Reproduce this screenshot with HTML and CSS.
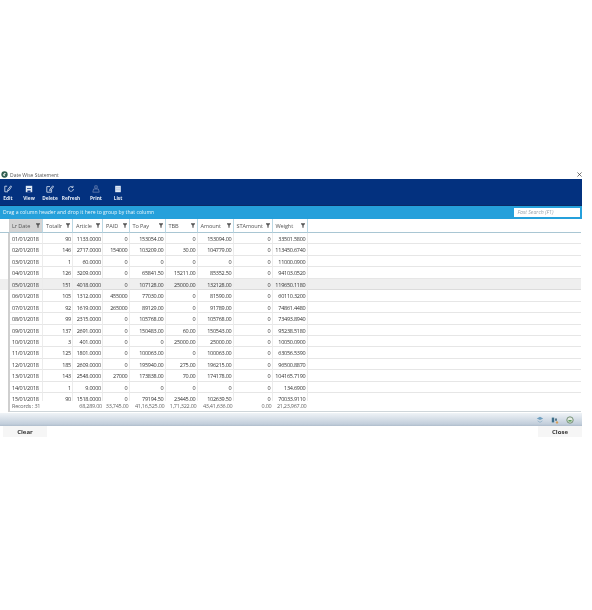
FILE: index.html
```html
<!DOCTYPE html>
<html lang="en">
<head>
<meta charset="utf-8">
<title>Date Wise Statement</title>
<link rel="stylesheet" href="styles.css">
</head>
<body>
<svg class="defs" width="0" height="0">
  <symbol id="funnel" viewBox="0 0 6 7"><path d="M0 0h6v1.2L3.9 3.4V7H2.1V3.4L0 1.2z"/></symbol>
</svg>
<main class="window">
  <div class="titlebar">
    <svg class="appicon" viewBox="0 0 8 8"><circle cx="4" cy="4" r="3.6" fill="#2f5d50"/><path d="M2 4.500 4 2l2 1-2 1 1 2-2-.5z" fill="#dfe8e4"/></svg>
    <span class="title">Date Wise Statement</span>
    <svg class="closex" viewBox="0 0 6 6"><path d="M.5.5l5 5M5.500.5l-5 5" stroke="#333" stroke-width=".8" fill="none"/></svg>
  </div>
  <div class="toolbar">
    <div class="tool"><svg viewBox="0 0 10 10"><path d="M1 1.500h3M1 1.500v7h4M8.500 1 5 5.500l-.5 2 2-1L9.500 2z" fill="none" stroke="#dfe9f5" stroke-width="1"/></svg><span>Edit</span></div>
    <div class="tool"><svg viewBox="0 0 10 10"><path d="M1 1h8v8H1z" fill="#dfe9f5"/><path d="M2.500 4h5v1h-5zM3 7h4v2H3z" fill="#0b3384"/></svg><span>View</span></div>
    <div class="tool"><svg viewBox="0 0 10 10"><path d="M1 2h4M1 2v7h6V6M8.500 1 5 5l-.5 2 2-1L9.500 2z" fill="none" stroke="#dfe9f5" stroke-width="1"/></svg><span>Delete</span></div>
    <div class="tool"><svg viewBox="0 0 10 10"><path d="M8 5a3 3 0 1 1-1-2.300M7.500 1v2h-2" fill="none" stroke="#dfe9f5" stroke-width="1"/></svg><span>Refresh</span></div>
    <div class="tool"><svg viewBox="0 0 10 10"><path d="M3.500 1h3v3h-3zM1 9l1-4h6l1 4z" fill="none" stroke="#7f93bd" stroke-width=".8"/></svg><span>Print</span></div>
    <div class="tool"><svg viewBox="0 0 10 10"><path d="M1.500 1h7v8h-7z" fill="#dfe9f5"/><path d="M2.500 3h5v1h-5zM2.500 5.500h5v1h-5z" fill="#9db2d6"/></svg><span>List</span></div>
  </div>
  <div class="groupbar">
    <span>Drag a column header and drop it here to group by that column</span>
    <span class="search">Fast Search (F1)</span>
  </div>
  <div class="grid">
    <div class="row head">
      <div class="ind"></div>
      <div class="hc sorted">Lr Date<svg><use href="#funnel"/></svg></div>
      <div class="hc">Totallr<svg><use href="#funnel"/></svg></div>
      <div class="hc">Article<svg><use href="#funnel"/></svg></div>
      <div class="hc">PAID<svg><use href="#funnel"/></svg></div>
      <div class="hc">To Pay<svg><use href="#funnel"/></svg></div>
      <div class="hc">TBB<svg><use href="#funnel"/></svg></div>
      <div class="hc">Amount<svg><use href="#funnel"/></svg></div>
      <div class="hc">STAmount<svg><use href="#funnel"/></svg></div>
      <div class="hc">Weight<svg><use href="#funnel"/></svg></div>
      <div class="fill"></div>
    </div>
    <div class="body">
      <div class="row"><div class="ind"></div><div class="c d">01/01/2018</div><div class="c">90</div><div class="c">1133.0000</div><div class="c">0</div><div class="c">153054.00</div><div class="c">0</div><div class="c">153094.00</div><div class="c">0</div><div class="c">33501.5800</div><div class="fill"></div></div>
      <div class="row"><div class="ind"></div><div class="c d">02/01/2018</div><div class="c">146</div><div class="c">2717.0000</div><div class="c">154000</div><div class="c">103209.00</div><div class="c">30.00</div><div class="c">104779.00</div><div class="c">0</div><div class="c">113450.6740</div><div class="fill"></div></div>
      <div class="row"><div class="ind"></div><div class="c d">03/01/2018</div><div class="c">1</div><div class="c">60.0000</div><div class="c">0</div><div class="c">0</div><div class="c">0</div><div class="c">0</div><div class="c">0</div><div class="c">11000.0900</div><div class="fill"></div></div>
      <div class="row"><div class="ind"></div><div class="c d">04/01/2018</div><div class="c">126</div><div class="c">3209.0000</div><div class="c">0</div><div class="c">65841.50</div><div class="c">15211.00</div><div class="c">85352.50</div><div class="c">0</div><div class="c">94103.0520</div><div class="fill"></div></div>
      <div class="row sel"><div class="ind"></div><div class="c d">05/01/2018</div><div class="c">151</div><div class="c">4018.0000</div><div class="c">0</div><div class="c">107128.00</div><div class="c">25000.00</div><div class="c">132128.00</div><div class="c">0</div><div class="c">119650.1180</div><div class="fill"></div></div>
      <div class="row"><div class="ind"></div><div class="c d">06/01/2018</div><div class="c">105</div><div class="c">1312.0000</div><div class="c">455000</div><div class="c">77030.00</div><div class="c">0</div><div class="c">81590.00</div><div class="c">0</div><div class="c">60110.3200</div><div class="fill"></div></div>
      <div class="row"><div class="ind"></div><div class="c d">07/01/2018</div><div class="c">92</div><div class="c">1619.0000</div><div class="c">265000</div><div class="c">89129.00</div><div class="c">0</div><div class="c">91789.00</div><div class="c">0</div><div class="c">74861.4480</div><div class="fill"></div></div>
      <div class="row"><div class="ind"></div><div class="c d">08/01/2018</div><div class="c">99</div><div class="c">2315.0000</div><div class="c">0</div><div class="c">105768.00</div><div class="c">0</div><div class="c">105768.00</div><div class="c">0</div><div class="c">73493.8940</div><div class="fill"></div></div>
      <div class="row"><div class="ind"></div><div class="c d">09/01/2018</div><div class="c">137</div><div class="c">2691.0000</div><div class="c">0</div><div class="c">150483.00</div><div class="c">60.00</div><div class="c">150543.00</div><div class="c">0</div><div class="c">95238.5180</div><div class="fill"></div></div>
      <div class="row"><div class="ind"></div><div class="c d">10/01/2018</div><div class="c">3</div><div class="c">401.0000</div><div class="c">0</div><div class="c">0</div><div class="c">25000.00</div><div class="c">25000.00</div><div class="c">0</div><div class="c">10050.0900</div><div class="fill"></div></div>
      <div class="row"><div class="ind"></div><div class="c d">11/01/2018</div><div class="c">125</div><div class="c">1801.0000</div><div class="c">0</div><div class="c">100063.00</div><div class="c">0</div><div class="c">100063.00</div><div class="c">0</div><div class="c">63056.5390</div><div class="fill"></div></div>
      <div class="row"><div class="ind"></div><div class="c d">12/01/2018</div><div class="c">185</div><div class="c">2609.0000</div><div class="c">0</div><div class="c">195940.00</div><div class="c">275.00</div><div class="c">196215.00</div><div class="c">0</div><div class="c">96500.8870</div><div class="fill"></div></div>
      <div class="row"><div class="ind"></div><div class="c d">13/01/2018</div><div class="c">143</div><div class="c">2548.0000</div><div class="c">27000</div><div class="c">173838.00</div><div class="c">70.00</div><div class="c">174178.00</div><div class="c">0</div><div class="c">104165.7190</div><div class="fill"></div></div>
      <div class="row"><div class="ind"></div><div class="c d">14/01/2018</div><div class="c">1</div><div class="c">9.0000</div><div class="c">0</div><div class="c">0</div><div class="c">0</div><div class="c">0</div><div class="c">0</div><div class="c">134.6900</div><div class="fill"></div></div>
      <div class="row"><div class="ind"></div><div class="c d">15/01/2018</div><div class="c">90</div><div class="c">1518.0000</div><div class="c">0</div><div class="c">79194.50</div><div class="c">23445.00</div><div class="c">102639.50</div><div class="c">0</div><div class="c">70033.9110</div><div class="fill"></div></div>
    </div>
    <div class="row foot">
      <div class="ind"></div><div class="f d">Records : 31</div><div class="f"></div><div class="f">68,289.00</div><div class="f">33,745.00</div><div class="f">41,16,525.00</div><div class="f">1,71,322.00</div><div class="f">43,41,636.00</div><div class="f">0.00</div><div class="f">21,23,967.00</div><div class="fill"></div>
    </div>
  </div>
  <div class="statusbar">
    <svg viewBox="0 0 10 10"><path d="M1 3l4-2 4 2-4 2z" fill="#6f9fc0"/><path d="M2 6l3 2 3-2" fill="none" stroke="#9bb7cb" stroke-width="1.200"/></svg>
    <svg viewBox="0 0 10 10"><path d="M1 2h3v6H1z" fill="#3d6f8a"/><path d="M5 3h2.500v3H5z" fill="#55768a"/><circle cx="7.500" cy="8" r="1.500" fill="#d9a05a"/></svg>
    <svg viewBox="0 0 10 10"><circle cx="5" cy="5" r="4" fill="#e4ebe4" stroke="#5c7c5c"/><path d="M3 5h4v2H3z" fill="#5f9e5f"/></svg>
  </div>
  <div class="actions">
    <button class="btn" type="button">Clear</button>
    <button class="btn" type="button">Close</button>
  </div>
</main>
</body>
</html>
```
FILE: styles.css
```css
* { box-sizing: border-box; }
html, body { margin: 0; background: #fff; }
body { font-family: "Open Sans", "Noto Sans", sans-serif; font-size: 5.500px; letter-spacing: -.25px; color: #333; padding-top: 170px; height: 610px; overflow: hidden; }
.defs { display: block; height: 0; }
.window { width: 582px; filter: blur(.4px); }

.titlebar { height: 9px; display: flex; align-items: center; gap: 2px; width: 586px; }
.appicon { width: 7px; height: 7px; margin-left: 1px; flex: none; }
.title { font-size: 5px; letter-spacing: 0; color: #555; }
.closex { width: 5px; height: 5px; margin-left: auto; margin-right: 4px; }

.toolbar { height: 26.500px; background: #03317f; display: flex; border-bottom: 1px solid #0b2a66; }
.tool { width: 21px; display: flex; flex-direction: column; align-items: center; padding-top: 5.500px; color: #e6edf6; font-size: 4.800px; letter-spacing: 0; font-weight: 700; line-height: 7px; }
.tool svg { width: 8px; height: 8px; margin-bottom: 2px; }
.tool:nth-child(1) { width: 16px; }
.tool:nth-child(2) { margin-left: 2.500px; }
.tool:nth-child(5) { width: 24px; margin-left: 2.500px; }
.tool:nth-child(6) { width: 20px; }

.groupbar { height: 13.500px; background: #25a0db; display: flex; align-items: center; justify-content: space-between; padding: 0 2.500px 0 3px; color: #eaf6fc; font-size: 5.100px; letter-spacing: 0; }
.search { width: 66px; height: 9.500px; background: #fff; color: #9aa4ad; font-style: italic; font-size: 5.200px; line-height: 9.500px; padding-left: 4px; }

.grid { width: 581px; }
.row { display: grid; grid-template-columns: 10px 33px 30px 30px 26.500px 36px 32px 36px 39px 35px 1fr; height: 11.450px; }
.row > * { border-bottom: 1px solid #e6e6e6; }
.row > .ind { border-bottom: 0; border-right: 2px solid #cfcfcf; }
.head { height: 14px; }
.head > *, .head > .ind { border-bottom: 1px solid #a9c6d3; }
.head > .ind { border-right: 1px solid #cfcfcf; }
.body { height: 167.500px; overflow: hidden; }
.sel { background: #efefef; }
.sel > * { border-bottom-color: #dcdcdc; }
.hc { display: flex; align-items: center; justify-content: space-between; padding: 0 2px 0 3px; border-right: 1px solid #bcd8e4; font-size: 5.600px; letter-spacing: -.1px; color: #555; white-space: nowrap; }
.hc svg { width: 4px; height: 5px; fill: #555; flex: none; }
.sorted { background: #d4d4d4; padding-left: 2px; }
.c { text-align: right; padding-right: 1px; border-right: 1px solid #ececec; line-height: 12.500px; white-space: nowrap; overflow: hidden; }
.c.d { text-align: left; padding-left: 2px; }
.foot { height: 11.500px; }
.foot > * { border-bottom-color: #cfd6da; }
.f { text-align: right; line-height: 10.500px; white-space: nowrap; padding-right: 1px; color: #666; }
.f.d { text-align: left; padding-left: 2px; }

.statusbar { height: 13px; margin-top: 1px; background: linear-gradient(#eff3f7, #c2cedb 85%, #aebccb); display: flex; justify-content: flex-end; align-items: center; gap: 7px; padding-right: 8px; }
.statusbar svg { width: 8px; height: 8px; }

.actions { display: flex; justify-content: space-between; padding-left: 3px; }
.btn { width: 44px; height: 11px; border: 0; padding: 0; background: #f6f6f6; color: #333; font: 700 6px "Open Sans", sans-serif; }
```
